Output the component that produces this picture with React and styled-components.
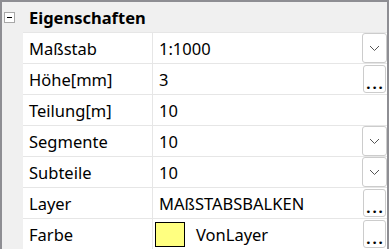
import React from "react";
import styled, { createGlobalStyle } from "styled-components";

const GlobalStyle = createGlobalStyle`
  body {
    margin: 0;
    font-family: "Noto Sans", "Open Sans", sans-serif;
    background: #ffffff;
  }
`;

const rows = [
  { name: "Maßstab", value: "1:1000", button: "drop" },
  { name: "Höhe[mm]", value: "3", button: "more" },
  { name: "Teilung[m]", value: "10" },
  { name: "Segmente", value: "10", button: "drop" },
  { name: "Subteile", value: "10", button: "drop" },
  { name: "Layer", value: "MAßSTABSBALKEN", button: "more" },
  { name: "Farbe", value: "VonLayer", button: "more", swatch: "#ffff80" },
];

function Chevron() {
  return (
    <svg width="11" height="7" viewBox="0 0 11 7">
      <path d="M1 1 L5.5 5.5 L10 1" fill="none" stroke="#555" strokeWidth="1" />
    </svg>
  );
}

export default function App() {
  return (
    <>
      <GlobalStyle />
      <Panel>
        <Header>
          <Toggle>
            <span />
          </Toggle>
          <Title>Eigenschaften</Title>
        </Header>
        <Rows>
          {rows.map((row) => (
            <Row key={row.name}>
              <Name>{row.name}</Name>
              <Value>
                {row.swatch && <Swatch color={row.swatch} />}
                <ValueText $swatch={!!row.swatch}>{row.value}</ValueText>
                {row.button === "drop" && (
                  <DropButton>
                    <Chevron />
                  </DropButton>
                )}
                {row.button === "more" && <MoreButton>...</MoreButton>}
              </Value>
            </Row>
          ))}
        </Rows>
      </Panel>
    </>
  );
}

const Panel = styled.div`
  box-sizing: border-box;
  width: 389px;
  height: 249px;
  overflow: hidden;
  background: #f0f0f0;
  border-top: 2px solid #8e8e93;
  border-left: 2px solid #8e8e93;
  border-right: 2px solid #8e8e93;
`;

const Header = styled.div`
  height: 30px;
  display: flex;
  align-items: center;
`;

const Toggle = styled.div`
  box-sizing: border-box;
  width: 11px;
  height: 11px;
  margin-left: 2px;
  border: 1px solid #a8a8a8;
  background: #ffffff;
  display: flex;
  align-items: center;
  justify-content: center;

  span {
    width: 5px;
    height: 1px;
    background: #000000;
  }
`;

const Title = styled.div`
  margin-left: 14px;
  font-size: 16.5px;
  font-weight: 700;
  color: #000000;
`;

const Rows = styled.div`
  margin-left: 21px;
`;

const Row = styled.div`
  display: grid;
  grid-template-columns: 130px 1fr;
  height: 30px;
  border-top: 1px solid #e6e6e6;
  background: #ffffff;
`;

const Name = styled.div`
  box-sizing: border-box;
  border-right: 1px solid #e6e6e6;
  padding-left: 6px;
  display: flex;
  align-items: center;
  font-size: 16.5px;
  color: #000000;
`;

const Value = styled.div`
  display: flex;
  align-items: center;
  padding-left: 2px;
  font-size: 16.5px;
  color: #000000;
`;

const ValueText = styled.span`
  flex: 1;
  margin-left: ${(p) => (p.$swatch ? "11px" : "4px")};
  white-space: nowrap;
`;

const Swatch = styled.div`
  box-sizing: border-box;
  width: 30px;
  height: 25px;
  border: 1px solid #000000;
  background: ${(p) => p.color};
`;

const DropButton = styled.div`
  box-sizing: border-box;
  width: 25px;
  height: 30px;
  border: 1px solid #cccccc;
  border-radius: 3px;
  background: #ffffff;
  display: flex;
  align-items: center;
  justify-content: center;
`;

const MoreButton = styled.div`
  box-sizing: border-box;
  width: 23px;
  height: 28px;
  margin-right: 1px;
  border: 1px solid #cccccc;
  border-radius: 3px;
  background: #ffffff;
  display: flex;
  align-items: flex-end;
  justify-content: center;
  font-size: 15px;
  font-weight: 700;
  line-height: 17px;
  letter-spacing: 2px;
  padding-left: 2px;
`;
